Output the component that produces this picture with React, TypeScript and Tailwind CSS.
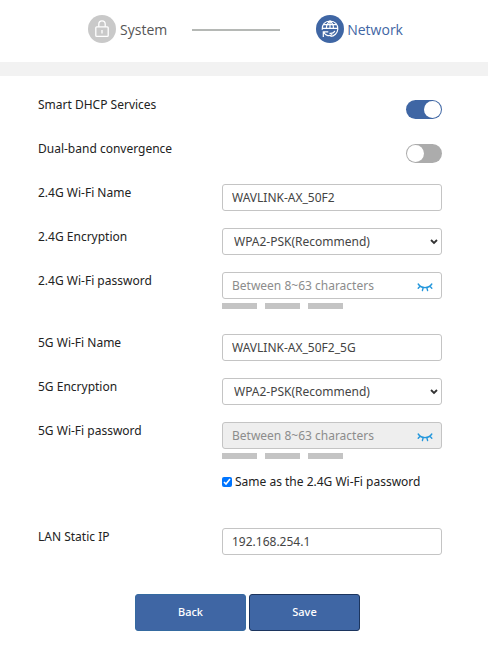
import { useState, type ReactNode } from "react";

const field =
  "block h-[27px] w-full rounded-[3px] border border-[#c4c4c4] bg-white px-[9px] text-[12px] text-[#444] outline-none placeholder:text-[#8c8c8c] disabled:bg-[#eeeeee]";

function Row({ label, htmlFor, children }: { label: string; htmlFor: string; children: ReactNode }) {
  return (
    <div className="flex min-h-11 items-start">
      <label htmlFor={htmlFor} className="w-46 shrink-0 leading-[18px]">
        {label}
      </label>
      <div className="min-w-0 flex-1">{children}</div>
    </div>
  );
}

function Toggle({ id, initial }: { id: string; initial: boolean }) {
  const [on, setOn] = useState(initial);
  return (
    <div className="flex justify-end pt-1">
      <input
        id={id}
        type="checkbox"
        role="switch"
        checked={on}
        onChange={() => setOn(!on)}
        className="flex h-[19px] w-9 appearance-none items-center rounded-full bg-[#acacac] px-px before:size-[17px] before:rounded-full before:bg-white checked:justify-end checked:bg-[#3f66a4]"
      />
    </div>
  );
}

function Encryption({ id }: { id: string }) {
  return (
    <div className="relative">
      <select id={id} className={`${field} appearance-none pl-[11px]`}>
        <option>WPA2-PSK(Recommend)</option>
      </select>
      <svg viewBox="0 0 8 6" className="pointer-events-none absolute top-[11px] right-1 h-[6px] w-2" fill="none" stroke="#333" strokeWidth="1.8">
        <path d="M1 1l3 3 3-3" />
      </svg>
    </div>
  );
}

function Password({ id, disabled }: { id: string; disabled?: boolean }) {
  return (
    <div>
      <div className="relative">
        <input id={id} type="password" disabled={disabled} placeholder="Between 8~63 characters" className={field} />
        <button type="button" aria-label="Show password" className="absolute top-[10px] right-[9px]">
          <svg viewBox="0 0 16 10" className="h-[10px] w-4" fill="none" stroke="#2497dc" strokeWidth="1.4" strokeLinecap="round">
            <path d="M1.2 2C4.5 6.8 11.5 6.8 14.8 2M3.3 4L1.2 6.2M6.2 5.5L5.4 8.5M9.8 5.5l.8 3M12.7 4l2.1 2.2" />
          </svg>
        </button>
      </div>
      <div className="mt-[4px] flex gap-2">
        <span className="h-[6px] w-[35px] bg-[#c4c4c4]" />
        <span className="h-[6px] w-[35px] bg-[#c4c4c4]" />
        <span className="h-[6px] w-[35px] bg-[#c4c4c4]" />
      </div>
    </div>
  );
}

export default function App() {
  return (
    <main className="bg-white font-['Noto_Sans','Open_Sans',sans-serif] text-[12px] text-[#222]">
      <header className="flex h-[76px] items-start justify-center border-b-[14px] border-[#f2f2f2] pt-[15px] pl-[3px]">
        <div className="flex items-center gap-1">
          <svg viewBox="0 0 28 28" className="size-7" fill="none" stroke="#fff" strokeWidth="1.3">
            <circle cx="14" cy="14" r="14" fill="#c9c9c9" stroke="none" />
            <rect x="7.8" y="11.8" width="12.4" height="9.6" rx="1" />
            <path d="M10.8 11.8V9a3.2 3.2 0 0 1 6.4 0v2.8M14 15v3.4" />
          </svg>
          <span className="font-['Open_Sans','Noto_Sans',sans-serif] text-[14px] text-[#555]">System</span>
        </div>
        <span className="mt-[14px] mr-7 ml-[25px] h-[2px] w-[88px] bg-[#b5b8b5]" />
        <div className="ml-2 flex items-center gap-[3px]">
          <svg viewBox="0 0 28 28" className="size-7" fill="none" stroke="#fff" strokeWidth="1.2">
            <circle cx="14" cy="14" r="14" fill="#3f66a4" stroke="none" />
            <path d="M6.2 14.7C5.8 9.6 9.1 6 14 6s8.2 3.6 7.8 8.2c-.3 4-3.5 7.1-7.4 7.3M6.6 13.3h14.8M7.8 9.7h12.4M14 6v7.3M14 6c-2.5 2-3.6 4.3-3.6 7.3M14 6c2.5 2 3.6 4.3 3.4 7.3" />
            <path d="M7.3 21.9v-5.1h5M7.6 17.1c1.7 3.3 5 4.7 8.7 2.3M13.5 18.3c2.8.4 4.7-.8 5.3-2.4" />
          </svg>
          <span className="font-['Open_Sans','Noto_Sans',sans-serif] text-[14px] text-[#3f66a4]">Network</span>
        </div>
      </header>

      <form className="pt-5" onSubmit={(e) => e.preventDefault()}>
        <div className="pr-[46px] pl-[38px]">
          <Row label="Smart DHCP Services" htmlFor="dhcp">
            <Toggle id="dhcp" initial />
          </Row>
          <Row label="Dual-band convergence" htmlFor="dual">
            <Toggle id="dual" initial={false} />
          </Row>
          <Row label="2.4G Wi-Fi Name" htmlFor="name24">
            <input id="name24" defaultValue="WAVLINK-AX_50F2" className={field} />
          </Row>
          <Row label="2.4G Encryption" htmlFor="enc24">
            <Encryption id="enc24" />
          </Row>
          <Row label="2.4G Wi-Fi password" htmlFor="pw24">
            <Password id="pw24" />
          </Row>
          <div className="pt-[18px]">
            <Row label="5G Wi-Fi Name" htmlFor="name5">
              <input id="name5" defaultValue="WAVLINK-AX_50F2_5G" className={field} />
            </Row>
            <Row label="5G Encryption" htmlFor="enc5">
              <Encryption id="enc5" />
            </Row>
            <Row label="5G Wi-Fi password" htmlFor="pw5">
              <Password id="pw5" disabled />
            </Row>
          </div>
          <label className="ml-46 flex items-center gap-[3px] pt-2 leading-4 whitespace-nowrap">
            <input type="checkbox" defaultChecked className="size-[10px] shrink-0 accent-[#0075ff]" />
            Same as the 2.4G Wi-Fi password
          </label>
          <div className="pt-[38px]">
            <Row label="LAN Static IP" htmlFor="lan">
              <input id="lan" defaultValue="192.168.254.1" className={field} />
            </Row>
          </div>
        </div>
        <div className="flex justify-center gap-[3px] pt-[22px] pb-4 pl-[7px]">
          <button type="button" className="h-[37px] w-[111px] rounded-[3px] border border-[#356aa0] bg-[#3f66a4] text-[11px] font-medium text-white">
            Back
          </button>
          <button type="submit" className="h-[37px] w-[111px] rounded-[3px] border border-[#1c355e] bg-[#3f66a4] text-[11px] font-medium text-white">
            Save
          </button>
        </div>
      </form>
    </main>
  );
}
